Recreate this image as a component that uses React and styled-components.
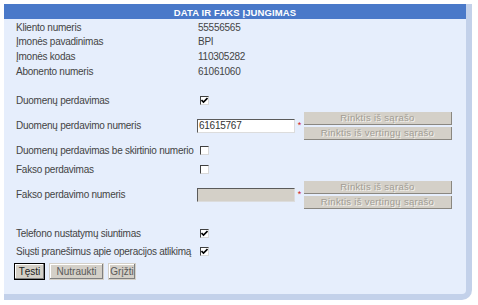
import React from 'react';
import styled, { createGlobalStyle } from 'styled-components';

const Global = createGlobalStyle`
  body {
    margin: 0;
    background: #ffffff;
    font-family: "Liberation Sans", Arial, sans-serif;
  }
`;

const Page = styled.div`
  padding: 4px 0 0 4px;
  width: 478px;
  height: 305px;
  box-sizing: border-box;
`;

const Panel = styled.div`
  width: 468px;
  height: 296px;
  box-sizing: border-box;
  background: #e6eefc;
  border-right: 6px solid #c3d1ea;
  border-bottom: 6px solid #c3d1ea;
  border-bottom-right-radius: 10px;
  display: flex;
  flex-direction: column;
`;

const Header = styled.div`
  height: 15px;
  background: #4a79c9;
  color: #ffffff;
  font-size: 9.5px;
  font-weight: bold;
  letter-spacing: 0.1px;
  display: flex;
  align-items: center;
  justify-content: center;
  padding-top: 1px;
  box-sizing: border-box;
`;

const Body = styled.div`
  padding: 1px 0 0 12px;
  display: flex;
  flex-direction: column;
  color: #444444;
  font-size: 10px;
  letter-spacing: -0.25px;
`;

const Row = styled.div`
  display: grid;
  grid-template-columns: 181px 1fr;
  align-items: center;
  height: ${p => p.$h}px;
  margin-top: ${p => p.$top || 0}px;
`;

const Label = styled.span`
  white-space: nowrap;
`;

const Value = styled.span`
  padding-left: 1px;
`;

const Field = styled.div`
  display: flex;
  align-items: center;
`;

const Input = styled.div`
  width: 98px;
  height: 14px;
  box-sizing: border-box;
  border-top: 1px solid #5a5a5a;
  border-left: 1px solid #5a5a5a;
  border-right: 1px solid #dcdcdc;
  border-bottom: 1px solid #dcdcdc;
  background: ${p => (p.$disabled ? '#d4d0c8' : '#ffffff')};
  font-size: 10px;
  line-height: 12px;
  padding-left: 1px;
  color: #333;
`;

const Star = styled.span`
  width: 9px;
  color: #d02020;
  font-size: 9px;
  text-align: center;
  line-height: 9px;
`;

const Picks = styled.div`
  display: flex;
  flex-direction: column;
  gap: 2px;
`;

const PickButton = styled.div`
  width: 148px;
  height: 13px;
  box-sizing: border-box;
  background: #d4d0c8;
  border-bottom: 1px solid #8a8780;
  border-right: 1px solid #8a8780;
  color: #a09c94;
  text-shadow: 1px 1px 0 #f4f2ee;
  font-size: 9.5px;
  letter-spacing: 0.3px;
  text-align: center;
  line-height: 12px;
`;

const Box = styled.span`
  margin-left: 3px;
  width: 9px;
  height: 9px;
  box-sizing: border-box;
  background: #ffffff;
  border-top: 1px solid #404040;
  border-left: 1px solid #404040;
  border-right: 1px solid #d8d8d8;
  border-bottom: 1px solid #d8d8d8;
  display: flex;
  align-items: center;
  justify-content: center;
`;

const Actions = styled.div`
  display: flex;
  gap: 4px;
  margin-top: 3px;
  margin-left: -2px;
`;

const ActionButton = styled.div`
  width: ${p => p.$w}px;
  height: 17px;
  box-sizing: border-box;
  background: #d4d0c8;
  border: 1px solid ${p => (p.$primary ? '#000000' : '#d4d0c8')};
  box-shadow: inset -1px -1px 0 #808080, inset 1px 1px 0 #ffffff;
  color: ${p => (p.$primary ? '#222222' : '#5a5a5a')};
  font-size: 10px;
  line-height: 15px;
  text-align: center;
  letter-spacing: 0;
`;

const Check = ({ checked }) => (
  <Box>
    {checked && (
      <svg width="7" height="7" viewBox="0 0 7 7">
        <path d="M0.5 3 L2.5 5 L6.5 1" stroke="#000" strokeWidth="1.6" fill="none" />
      </svg>
    )}
  </Box>
);

const NumberField = ({ value, disabled }) => (
  <Field>
    <Input $disabled={disabled}>{value}</Input>
    <Star>*</Star>
    <Picks>
      <PickButton>Rinktis iš sąrašo</PickButton>
      <PickButton>Rinktis iš vertingų sąrašo</PickButton>
    </Picks>
  </Field>
);

const info = [
  ['Kliento numeris', '55556565'],
  ['Įmonės pavadinimas', 'BPI'],
  ['Įmonės kodas', '110305282'],
  ['Abonento numeris', '61061060'],
];

export default function App() {
  return (
    <Page>
      <Global />
      <Panel>
        <Header>DATA IR FAKS ĮJUNGIMAS</Header>
        <Body>
          {info.map(([k, v]) => (
            <Row key={k} $h={14.6}>
              <Label>{k}</Label>
              <Value>{v}</Value>
            </Row>
          ))}
          <Row $h={20} $top={12}>
            <Label>Duomenų perdavimas</Label>
            <Check checked />
          </Row>
          <Row $h={29} $top={1}>
            <Label>Duomenų perdavimo numeris</Label>
            <NumberField value="61615767" />
          </Row>
          <Row $h={18} $top={1}>
            <Label>Duomenų perdavimas be skirtinio numerio</Label>
            <Check />
          </Row>
          <Row $h={18} $top={1}>
            <Label>Fakso perdavimas</Label>
            <Check />
          </Row>
          <Row $h={29} $top={2}>
            <Label>Fakso perdavimo numeris</Label>
            <NumberField disabled />
          </Row>
          <Row $h={18} $top={15}>
            <Label>Telefono nustatymų siuntimas</Label>
            <Check checked />
          </Row>
          <Row $h={18}>
            <Label>Siųsti pranešimus apie operacijos atlikimą</Label>
            <Check checked />
          </Row>
          <Actions>
            <ActionButton $primary $w={31}>Tęsti</ActionButton>
            <ActionButton $w={55}>Nutraukti</ActionButton>
            <ActionButton $w={28}>Grįžti</ActionButton>
          </Actions>
        </Body>
      </Panel>
    </Page>
  );
}
